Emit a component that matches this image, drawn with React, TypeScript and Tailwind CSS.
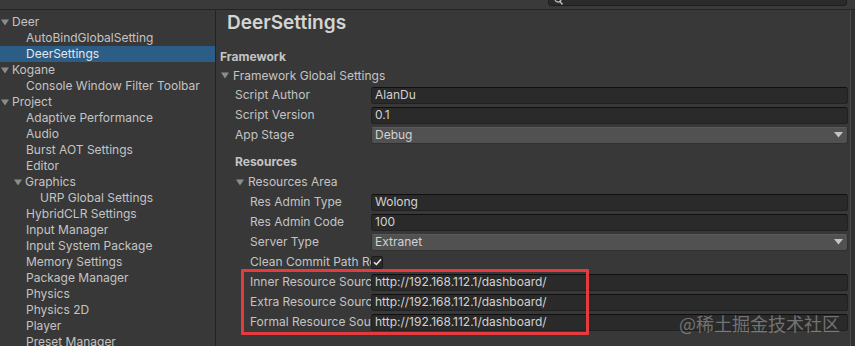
import React from "react";

const tree: { label: string; depth: number; arrow?: boolean; selected?: boolean }[] = [
  { label: "Deer", depth: 0, arrow: true },
  { label: "AutoBindGlobalSetting", depth: 1 },
  { label: "DeerSettings", depth: 1, selected: true },
  { label: "Kogane", depth: 0, arrow: true },
  { label: "Console Window Filter Toolbar", depth: 1 },
  { label: "Project", depth: 0, arrow: true },
  { label: "Adaptive Performance", depth: 1 },
  { label: "Audio", depth: 1 },
  { label: "Burst AOT Settings", depth: 1 },
  { label: "Editor", depth: 1 },
  { label: "Graphics", depth: 1, arrow: true },
  { label: "URP Global Settings", depth: 2 },
  { label: "HybridCLR Settings", depth: 1 },
  { label: "Input Manager", depth: 1 },
  { label: "Input System Package", depth: 1 },
  { label: "Memory Settings", depth: 1 },
  { label: "Package Manager", depth: 1 },
  { label: "Physics", depth: 1 },
  { label: "Physics 2D", depth: 1 },
  { label: "Player", depth: 1 },
  { label: "Preset Manager", depth: 1 },
];

const Arrow = () => (
  <svg width="8" height="7" viewBox="0 0 8 7" className="shrink-0">
    <path d="M0 0.5 H8 L4 6.5 Z" fill="#8c8c8c" />
  </svg>
);

const TextField = ({ value }: { value: string }) => (
  <div className="flex-1 h-[17px] rounded-[3px] bg-[#2a2a2a] border border-[#212121] border-t-[#0f0f0f] flex items-center pl-[3px] text-[#d2d2d2] whitespace-nowrap overflow-hidden">
    {value}
  </div>
);

const Dropdown = ({ value }: { value: string }) => (
  <div className="flex-1 h-[17px] rounded-[3px] bg-[#515151] border border-[#303030] border-t-[#5a5a5a] flex items-center justify-between pl-[3px] pr-[4px] text-[#d2d2d2]">
    <span>{value}</span>
    <svg width="9" height="6" viewBox="0 0 9 6">
      <path d="M0 0 H9 L4.5 5.5 Z" fill="#c4c4c4" />
    </svg>
  </div>
);

const Row = ({ label, width, children }: { label: string; width: string; children: React.ReactNode }) => (
  <div className="flex items-center h-[20px]">
    <div className={`${width} shrink-0 overflow-hidden whitespace-nowrap text-[#c4c4c4]`}>{label}</div>
    {children}
  </div>
);

export default function App() {
  return (
    <div
      className="relative w-[855px] h-[346px] bg-[#383838] flex flex-col overflow-hidden text-[12px]"
      style={{ fontFamily: "Inter, 'Noto Sans', sans-serif" }}
    >
      {/* toolbar */}
      <div className="h-[10px] shrink-0 bg-[#3a3a3a] border-b border-[#242424] flex">
        <div className="ml-[548px] w-[299px] h-[7px] -mt-[1px] rounded-b-[3px] bg-[#2a2a2a] border border-[#1e1e1e] relative">
          <svg width="10" height="6" viewBox="0 0 10 6" className="absolute left-[5px] top-0">
            <circle cx="4" cy="-1" r="3" stroke="#bdbdbd" strokeWidth="1.3" fill="none" />
            <path d="M6 1.5 L8.5 4.5" stroke="#bdbdbd" strokeWidth="1.4" />
          </svg>
        </div>
      </div>

      <div className="flex flex-1 min-h-0">
        {/* tree */}
        <div className="w-[216px] shrink-0 pt-[4px] border-r border-[#232323]">
          {tree.map((t) => (
            <div
              key={t.label}
              className={`h-[16px] flex items-center whitespace-nowrap ${
                t.selected ? "bg-[#2c5d87] text-[#e6e6e6]" : "text-[#c4c4c4]"
              }`}
            >
              <div
                className={`flex items-center ${
                  t.depth === 0 ? "pl-[1px]" : t.depth === 1 ? (t.arrow ? "pl-[14px]" : "pl-[26px]") : "pl-[40px]"
                }`}
              >
                {t.arrow && (
                  <span className="mr-[3px] flex">
                    <Arrow />
                  </span>
                )}
                {t.label}
              </div>
            </div>
          ))}
        </div>

        {/* inspector */}
        <div className="flex-1 pr-[2px]">
          <div className="h-[26px] pl-[11px] flex items-center text-[19px] font-semibold text-[#d4d4d4]">
            DeerSettings
          </div>
          <div className="mt-[12px] h-[18px] pl-[4px] flex items-center font-bold text-[#c4c4c4]">Framework</div>
          <div className="h-[19px] pl-[5px] flex items-center gap-[4px] text-[#c4c4c4]">
            <Arrow />
            Framework Global Settings
          </div>
          <div className="pl-[19px]">
            <Row label="Script Author" width="w-[136px]">
              <TextField value="AlanDu" />
            </Row>
            <Row label="Script Version" width="w-[136px]">
              <TextField value="0.1" />
            </Row>
            <Row label="App Stage" width="w-[136px]">
              <Dropdown value="Debug" />
            </Row>
          </div>
          <div className="mt-[7px] h-[20px] pl-[19px] flex items-center font-bold text-[#c4c4c4]">Resources</div>
          <div className="h-[20px] pl-[20px] flex items-center gap-[4px] text-[#c4c4c4]">
            <Arrow />
            Resources Area
          </div>
          <div className="pl-[34px]">
            <Row label="Res Admin Type" width="w-[121px]">
              <TextField value="Wolong" />
            </Row>
            <Row label="Res Admin Code" width="w-[121px]">
              <TextField value="100" />
            </Row>
            <Row label="Server Type" width="w-[121px]">
              <Dropdown value="Extranet" />
            </Row>
            <Row label="Clean Commit Path Root" width="w-[121px]">
              <div className="w-[12px] h-[13px] rounded-[2px] bg-[#2a2a2a] border border-[#1c1c1c] flex items-center justify-center">
                <svg width="9" height="8" viewBox="0 0 9 8">
                  <path d="M1 4.2 L3.4 6.5 L8 1.2" stroke="#e8e8e8" strokeWidth="1.5" fill="none" />
                </svg>
              </div>
            </Row>
            <Row label="Inner Resource Source Path" width="w-[121px]">
              <TextField value="http://192.168.112.1/dashboard/" />
            </Row>
            <Row label="Extra Resource Source Path" width="w-[121px]">
              <TextField value="http://192.168.112.1/dashboard/" />
            </Row>
            <Row label="Formal Resource Source Path" width="w-[121px]">
              <TextField value="http://192.168.112.1/dashboard/" />
            </Row>
          </div>
        </div>

        {/* scrollbar edge */}
        <div className="w-[5px] shrink-0 border-l border-[#4a4a4a] bg-[#303030]" />
      </div>

      {/* annotation */}
      <div className="absolute left-[241px] top-[269px] w-[348px] h-[66px] border-[3px] border-[#e53a3e] rounded-[1px]" />
      <div
        className="absolute left-[679px] top-[310px] text-[18px] text-white/35 whitespace-nowrap"
        style={{ fontFamily: "'Noto Sans CJK SC', sans-serif" }}
      >
        @稀土掘金技术社区
      </div>
    </div>
  );
}
